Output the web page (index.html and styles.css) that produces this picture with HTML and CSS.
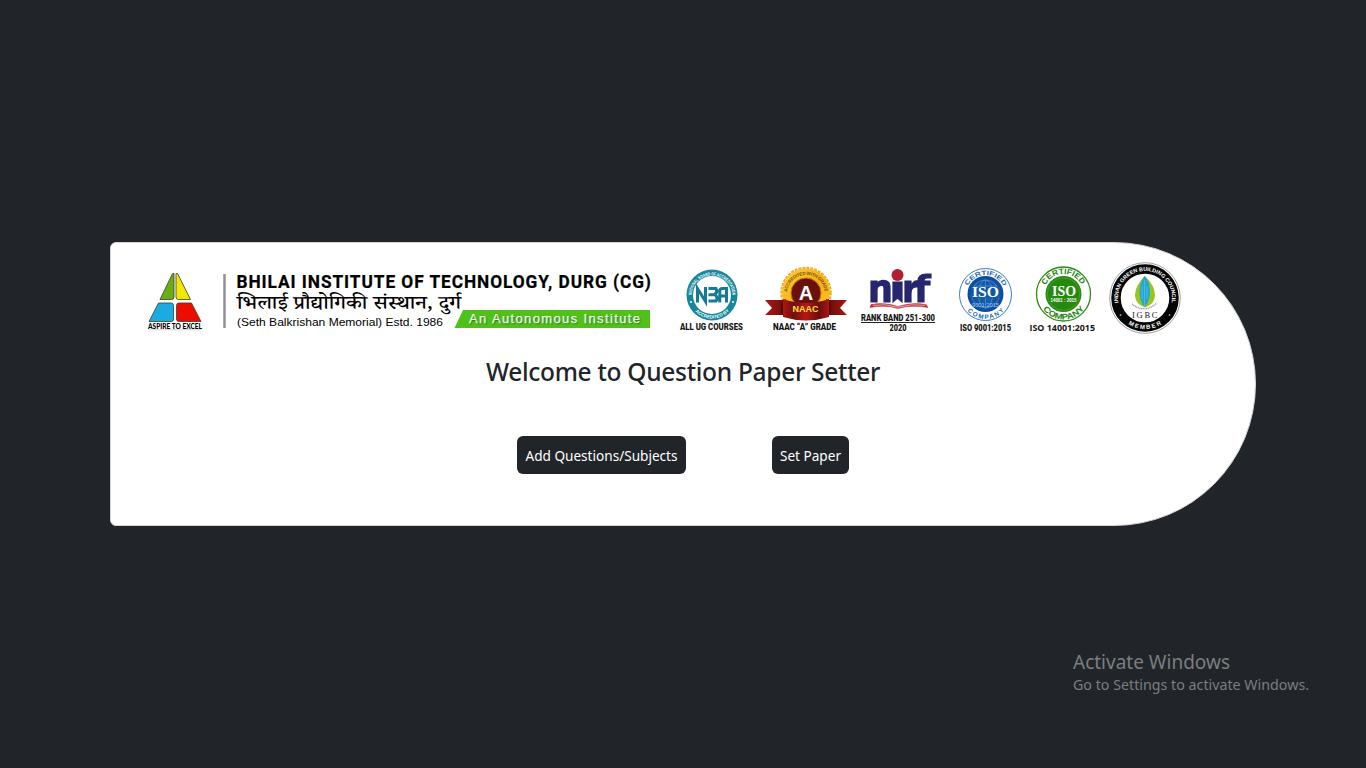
FILE: index.html
```html
<!DOCTYPE html>
<html lang="en">
<head>
<meta charset="utf-8">
<title>Question Paper Setter</title>
<link rel="stylesheet" href="styles.css">
</head>
<body>
<main class="card">
<svg class="banner" viewBox="127 259 1112 80" role="img" aria-label="Bhilai Institute of Technology, Durg">
  <defs>
    <path id="nba-top" d="M691.500 296A20.500 20.500 0 0 1 732.500 296"/>
    <path id="nba-bottom" d="M688.500 295A23.500 23.500 0 0 0 735.500 295"/>
    <path id="naac-arc" d="M787 294A19 19 0 0 1 825 294"/>
    <path id="iso-top" d="M965.500 295A20 20 0 0 1 1005.500 295"/>
    <path id="iso-bottom" d="M961 294.500A24.500 24.500 0 0 0 1010 294.500"/>
    <path id="iso14-top" d="M1043.500 294A20 20 0 0 1 1083.500 294"/>
    <path id="iso14-bottom" d="M1038 294A25.500 25.500 0 0 0 1089 294"/>
    <path id="igbc-top" d="M1119.100 305.500A27 27 0 1 1 1170.900 305.500"/>
    <path id="igbc-bottom" d="M1114 298A31 31 0 0 0 1176 298"/>
    <linearGradient id="gold" x2="1" y2="1"><stop stop-color="#ffd43b"/><stop offset=".5" stop-color="#f5ad16"/><stop offset="1" stop-color="#ffc928"/></linearGradient>
    <linearGradient id="ribbon"><stop stop-color="#b01412"/><stop offset=".22" stop-color="#70100f"/><stop offset=".5" stop-color="#b71612"/><stop offset=".78" stop-color="#65100f"/><stop offset="1" stop-color="#b01412"/></linearGradient>
    <radialGradient id="blue"><stop stop-color="#1767bd"/><stop offset="1" stop-color="#0c4b9e"/></radialGradient>
  </defs>

  <g stroke="#3c3c32" stroke-width=".8" stroke-linejoin="round">
    <path fill="#69ad12" d="M172.500 273.500H174V297Q174 299.500 171.500 299.500H160Z"/>
    <path fill="#f5e600" d="M176 273.500H177.500L190.500 299.500H178.500Q176 299.500 176 297Z"/>
    <path fill="#1aabe3" d="M158.500 303H171.500Q173.500 303 173.500 305.500V319Q173.500 321.500 171 321.500H149Z"/>
    <path fill="#ec0d00" d="M178.500 303H191.500L201 321.500H179Q176.500 321.500 176.500 319V305.500Q176.500 303 178.500 303Z"/>
  </g>
  <text class="motto" x="148" y="328.600" textLength="54" lengthAdjust="spacingAndGlyphs">ASPIRE TO EXCEL</text>
  <path d="M149 329.800H201" stroke="#aaa" stroke-width=".5"/>
  <path d="M224.500 274V328" stroke="#929292" stroke-width="2.500"/>
  <text class="institute" transform="translate(236.500 287.500) scale(.9 1)" textLength="460.500">BHILAI INSTITUTE OF TECHNOLOGY, DURG (CG)</text>
  <text class="hindi" x="237" y="309" textLength="224" lengthAdjust="spacingAndGlyphs">भिलाई प्रौद्योगिकी संस्थान, दुर्ग</text>
  <text class="memorial" x="237" y="325.500" textLength="206" lengthAdjust="spacingAndGlyphs">(Seth Balkrishan Memorial) Estd. 1986</text>
  <path d="M463 310H650V328H454.500Z" fill="#4fc119"/>
  <text class="autonomous" x="469" y="323" textLength="171">An Autonomous Institute</text>

  <g>
    <circle cx="712" cy="295" r="25.500" fill="#17889b"/>
    <circle cx="712" cy="295" r="19" fill="#fff"/>
    <g class="ring" font-size="4.600">
      <text><textPath href="#nba-top" startOffset="1" textLength="62" lengthAdjust="spacingAndGlyphs">NATIONAL BOARD OF ACCREDITATION</textPath></text>
      <text><textPath href="#nba-bottom" startOffset="18" textLength="38">ACCREDITED BY</textPath></text>
    </g>
    <g fill="#fff"><circle cx="691" cy="302" r="1"/><circle cx="733" cy="302" r="1"/></g>
    <path d="M697.500 302.500V288.500L705.500 301.500V287M708.500 288.500H716Q718 291.500 715 294.500Q718.500 298 716 301H708.500M708.500 294.800H715M719.800 302.500V291Q719.800 288.500 722.500 288.500H726.500V302.500M720 296H726.500" fill="none" stroke="#147b90" stroke-width="3"/>
  </g>
  <text class="caption" x="680" y="330" textLength="63" lengthAdjust="spacingAndGlyphs">ALL UG COURSES</text>

  <g>
    <circle cx="806" cy="292.500" r="24" fill="url(#gold)"/>
    <circle cx="806" cy="292.500" r="24.700" fill="none" stroke="#f2ad1e" stroke-width="2" stroke-dasharray="3 1"/>
    <circle cx="806" cy="293" r="15" fill="#6b110d" stroke="#bc7614"/>
    <path d="M765 300H784V315H765L772 308ZM847 300H828V315H847L840 308Z" fill="url(#ribbon)"/>
    <path d="M781 302L786 299V317L781 314M831 302L826 299V317L831 314" fill="#560b0b"/>
    <path d="M783 299Q806 307 829 299V317Q806 324 783 317Z" fill="url(#ribbon)"/>
    <text class="naac-arc"><textPath href="#naac-arc" startOffset="2" textLength="55">ACCREDITED WITH GRADE</textPath></text>
    <text class="naac-letter" x="806" y="300">A</text>
    <text class="naac-name" x="792.500" y="312" textLength="26" lengthAdjust="spacingAndGlyphs">NAAC</text>
  </g>
  <text class="caption" x="773" y="330" textLength="63" lengthAdjust="spacingAndGlyphs">NAAC “A” GRADE</text>

  <g>
    <circle cx="897.500" cy="275" r="6" fill="#b51e32"/>
    <path d="M871 281H877V283.500Q880 280 885 280.500Q890 281 890 287V302H884V288Q884 285 881 285.500Q877 286 877 290V302H871ZM893 282H902V302L897.500 298L893 302ZM905 281H911V286Q914 280 918 281V287Q911 286 911 293V302H905ZM918 302V285H915V281H918Q918 274 926 274H931V278H927Q924 278 924 281H930V285H924V302Z" fill="#25266d" stroke="#25266d" stroke-width="1.200"/>
    <path d="M871 304.500Q885 302 898 306.500Q912 302 926 304.500L928 307.500Q912 304.500 898 308.500Q885 304.500 870 307.500Z" fill="#bc2836" stroke="#bc2836" stroke-width=".5"/>
    <path d="M873 305.300Q885 303.300 898 307.300Q912 303.300 925 305.300" fill="none" stroke="#f3dcdc" stroke-width=".7"/>
  </g>
  <text class="caption" x="861" y="321" textLength="74" lengthAdjust="spacingAndGlyphs">RANK BAND 251-300</text>
  <path d="M861 322.500H935" stroke="#222"/>
  <text class="caption" x="889.500" y="331" textLength="17" lengthAdjust="spacingAndGlyphs">2020</text>

  <g>
    <circle cx="985.500" cy="294.500" r="26" fill="#fff" stroke="#397dc0"/>
    <circle cx="985.500" cy="294" r="18" fill="url(#blue)"/>
    <g stroke="#5c96d0" stroke-width=".7" fill="none"><circle cx="985.500" cy="294" r="14"/><ellipse cx="985.500" cy="294" rx="7" ry="14"/><path d="M985.500 280V308M974 286H997"/></g>
    <text class="ring ring-blue" font-size="6.300"><textPath href="#iso-top" startOffset="9.500" textLength="44" lengthAdjust="spacingAndGlyphs">CERTIFIED</textPath></text>
    <text class="ring ring-blue" font-size="6.300"><textPath href="#iso-bottom" startOffset="18" textLength="41">COMPANY</textPath></text>
    <rect x="971" y="287" width="29" height="10.500" fill="#1258a9"/>
    <text class="iso" x="972" y="296.500" textLength="27" lengthAdjust="spacingAndGlyphs">ISO</text>
    <text class="iso-code-blue" x="972" y="306.500" textLength="27" lengthAdjust="spacingAndGlyphs">9001:2015</text>
  </g>
  <text class="caption" x="960" y="331" textLength="51" lengthAdjust="spacingAndGlyphs">ISO 9001:2015</text>

  <g>
    <circle cx="1063.500" cy="294" r="27" fill="#fff" stroke="#2a8d13" stroke-width="1.300"/>
    <circle cx="1063.500" cy="294" r="18" fill="#278a0e"/>
    <circle cx="1063.500" cy="294" r="16.300" fill="none" stroke="#4aa331" stroke-width=".8"/>
    <text class="ring ring-green" font-size="7.800"><textPath href="#iso14-top" startOffset="9" textLength="44" lengthAdjust="spacingAndGlyphs">CERTIFIED</textPath></text>
    <text class="ring ring-green" font-size="8"><textPath href="#iso14-bottom" startOffset="16" textLength="48" lengthAdjust="spacingAndGlyphs">COMPANY</textPath></text>
    <text class="iso" x="1052" y="295.500" textLength="24" lengthAdjust="spacingAndGlyphs">ISO</text>
    <text class="iso-code" x="1050.500" y="302" textLength="26" lengthAdjust="spacingAndGlyphs">14001 : 2015</text>
  </g>
  <text class="caption caption-wide" x="1029.500" y="331" textLength="65.500" lengthAdjust="spacingAndGlyphs">ISO 14001:2015</text>

  <g>
    <circle cx="1145" cy="298" r="35.300" fill="#fff" stroke="#777" stroke-width=".7"/>
    <circle cx="1145" cy="298" r="29" fill="none" stroke="#050505" stroke-width="9.500"/>
    <text class="ring" font-size="5.400"><textPath href="#igbc-top" startOffset="3" textLength="94" lengthAdjust="spacingAndGlyphs">INDIAN GREEN BUILDING COUNCIL</textPath></text>
    <text class="ring" font-size="6"><textPath href="#igbc-bottom" startOffset="31" textLength="35">MEMBER</textPath></text>
    <g fill="#ddd"><circle cx="1120.500" cy="315" r=".8"/><circle cx="1169.500" cy="315" r=".8"/></g>
    <path d="M1145 276Q1155 286 1155 295Q1155 304 1145 307.500Q1135 304 1135 295Q1135 286 1145 276Z" fill="#9bc51b"/>
    <path d="M1144.500 276Q1150 282 1150 292Q1150 301 1144.500 307Q1139.500 301 1139.500 292Q1139.500 282 1144.500 276Z" fill="#23a7d4"/>
    <path d="M1144.500 280V307M1142 286V299M1147 286V299" stroke="#5cbce1" stroke-width=".8"/>
    <path d="M1132 304Q1144 314 1157 303" fill="none" stroke="#999" stroke-width="1.500" stroke-dasharray="1 .7"/>
    <text class="igbc" x="1132" y="318" textLength="25.500">IGBC</text>
  </g>
</svg>
<h1 class="title">Welcome to Question Paper Setter</h1>
<nav class="actions">
  <button class="button button-add" type="button">Add Questions/Subjects</button>
  <button class="button button-set" type="button">Set Paper</button>
</nav>
</main>
<aside class="notice">
  <div class="notice-title">Activate Windows</div>
  <div class="notice-text">Go to Settings to activate Windows.</div>
</aside>
</body>
</html>
```
FILE: styles.css
```css
* { box-sizing: border-box; }
body {
  margin: 0;
  height: 100vh;
  overflow: hidden;
  display: flex;
  align-items: center;
  justify-content: center;
  background: #212529;
  color: #212529;
  font-family: "Noto Sans", "Open Sans", sans-serif;
}
.card {
  width: 1146px;
  height: 284px;
  padding: 16px;
  background: #fff;
  border: 1px solid #d3d3d4;
  border-radius: 6px 142px 142px 6px;
}
.banner {
  display: block;
  width: 1112px;
  height: 80px;
  font-family: "Liberation Sans", sans-serif;
}
.title {
  margin: 15px 0 0;
  font-size: 24.5px;
  line-height: 36px;
  letter-spacing: -.29px;
  font-weight: 500;
  text-align: center;
  white-space: nowrap;
}
.actions {
  display: flex;
  justify-content: center;
  gap: 86px;
  margin-top: 46px;
}
.button {
  height: 38px;
  padding: 1px 0 0;
  border: 0;
  border-radius: 6px;
  background: #212529;
  color: #fff;
  font: 13.6px "Noto Sans", "Open Sans", sans-serif;
  white-space: nowrap;
}
.button-add { width: 169px; }
.button-set { width: 77px; }
.notice {
  position: absolute;
  left: 1073px;
  top: 649px;
  color: #7b7e80;
  white-space: nowrap;
}
.notice-title { font-size: 19px; line-height: 26px; }
.notice-text { font-size: 14.25px; line-height: 20px; }

.motto { font: 900 7.2px Lato, sans-serif; }
.institute { font: 700 19.2px Roboto, sans-serif; stroke: #000; stroke-width: .25px; }
.hindi { font: 500 19px "Noto Serif Devanagari", "Noto Sans Devanagari", "Noto Sans", sans-serif; }
.memorial { font-size: 11.3px; }
.autonomous { font-size: 13px; fill: #fff; stroke: #fff; stroke-width: .25px; text-shadow: 1px 1px 1px #397f20; }
.caption { font: 900 8.2px Roboto, sans-serif; fill: #151515; }
.caption-wide { font: 700 9px "Open Sans", sans-serif; }
.ring { font-weight: 700; fill: #fff; }
.ring-blue { fill: #2568b5; }
.ring-green { fill: #27840f; }
.naac-arc { font-size: 4.6px; font-weight: 700; fill: #805511; }
.naac-letter { font-size: 20px; font-weight: 700; fill: #fff; text-anchor: middle; }
.naac-name { font-size: 9px; font-weight: 700; fill: #ffe32b; }
.iso { font: 700 14px "Liberation Serif", serif; fill: #fff; }
.iso-code { font-size: 5px; font-weight: 700; fill: #fff; }
.iso-code-blue { font-size: 6px; fill: #a9cbed; }
.igbc { font: 8.5px "Liberation Serif", serif; fill: #222; }
```
